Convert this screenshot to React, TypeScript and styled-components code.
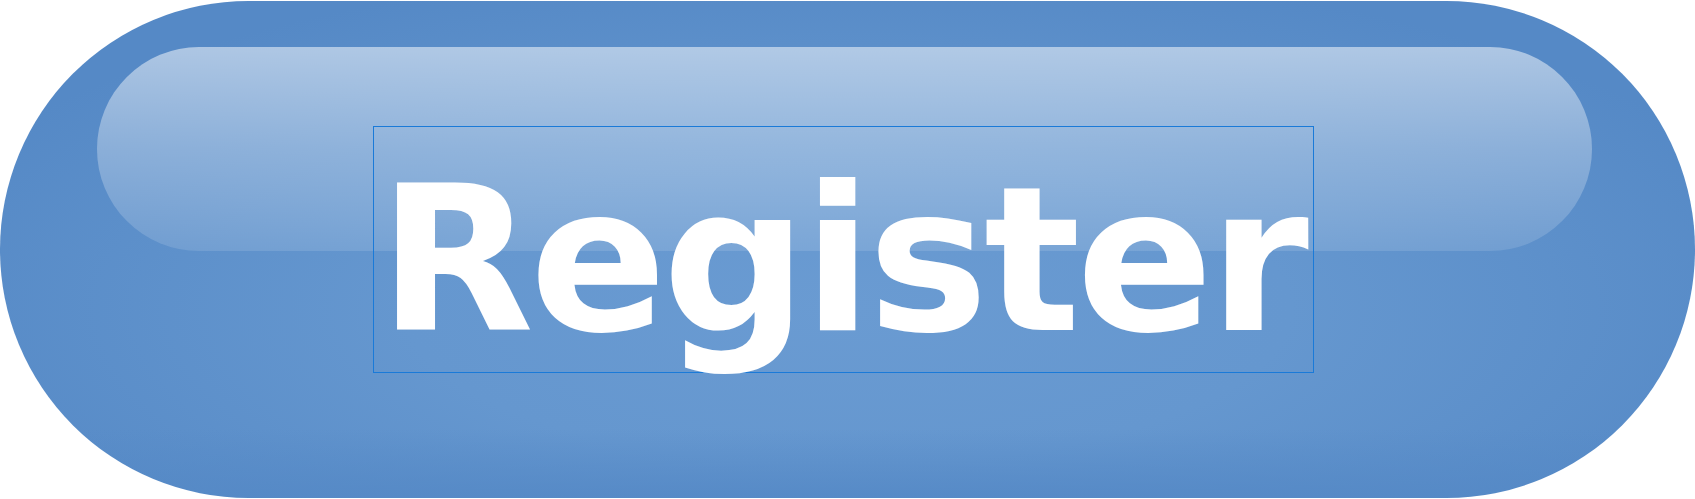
import React from "react";
import styled, {createGlobalStyle} from "styled-components";

const GlobalStyle = createGlobalStyle`
  html, body {
    margin: 0;
    padding: 0;
    background: #ffffff;
  }
`

const Page = styled.div`
  width: 1695px;
  height: 499px;
  padding-top: 1px;
  box-sizing: border-box;
`

const Pill = styled.button`
  position: relative;
  display: flex;
  align-items: center;
  justify-content: center;
  width: 1695px;
  height: 497px;
  margin: 0;
  padding: 0 8px 0 0;
  border: none;
  border-radius: 249px;
  overflow: hidden;
  cursor: pointer;
  background:
    linear-gradient(to bottom, rgba(85, 137, 198, 0) 86%, rgba(85, 137, 198, 0.9) 100%),
    radial-gradient(ellipse 58% 70% at 50% 62%, #6a9bd2 0%, #6597cf 45%, #5589c6 100%);
`

// the glossy highlight laid over the upper half of the pill
const Gloss = styled.span`
  position: absolute;
  top: 46px;
  left: 97px;
  right: 103px;
  height: 204px;
  border-radius: 102px;
  background: linear-gradient(to bottom, rgba(255, 255, 255, 0.52) 0%, rgba(255, 255, 255, 0.3) 50%, rgba(255, 255, 255, 0.12) 100%);
  pointer-events: none;
`

const Label = styled.span<{$frame: string}>`
  position: relative;
  display: block;
  padding: 32px 8px 11px 4px;
  border: 1px solid ${props => props.$frame};
  font-family: "DejaVu Sans", Verdana, sans-serif;
  font-weight: bold;
  font-size: 202px;
  line-height: 202px;
  letter-spacing: -4.2px;
  color: #ffffff;
  white-space: nowrap;
`

export default function App() {
  return <Page>
    <GlobalStyle/>
    <Pill type="button">
      <Gloss/>
      <Label $frame="#1a7ad8">Register</Label>
    </Pill>
  </Page>
}
